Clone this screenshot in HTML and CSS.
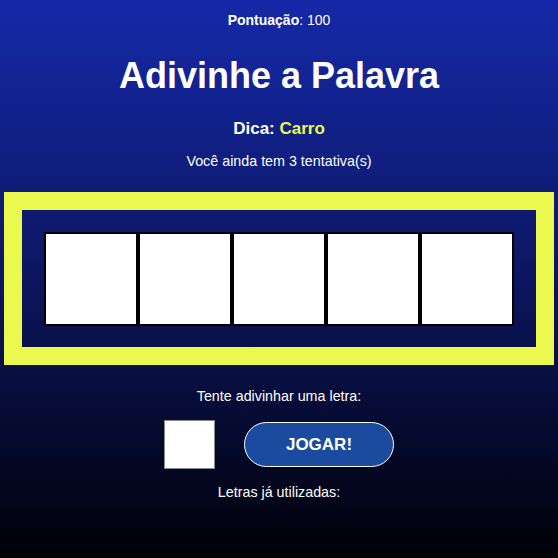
FILE: index.html
```html
<!DOCTYPE html>
<html lang="pt">
<head>
<meta charset="utf-8">
<link rel="stylesheet" href="styles.css">
</head>
<body>
<main class="game">
  <p class="score"><b>Pontuação</b>: 100</p>
  <h1 class="title">Adivinhe a Palavra</h1>
  <p class="hint">Dica: <span class="hint-word">Carro</span></p>
  <p class="tries">Você ainda tem 3 tentativa(s)</p>
  <section class="board">
    <div class="slots">
      <div class="slot"></div>
      <div class="slot"></div>
      <div class="slot"></div>
      <div class="slot"></div>
      <div class="slot"></div>
    </div>
  </section>
  <p class="prompt">Tente adivinhar uma letra:</p>
  <div class="controls">
    <input class="letter" type="text" maxlength="1">
    <button class="play">JOGAR!</button>
  </div>
  <p class="used">Letras já utilizadas:</p>
</main>
</body>
</html>
```
FILE: styles.css
```css
html, body {
  margin: 0;
  height: 100%;
}
body {
  background: linear-gradient(to bottom, #1529a8 0%, #0c1660 50%, #000006 100%);
  font-family: "Liberation Sans", Arial, sans-serif;
  color: #fff;
}
.game {
  display: flex;
  flex-direction: column;
  align-items: center;
  padding: 12px 4px 0;
}
.score {
  margin: 0;
  font-size: 14px;
  line-height: 16px;
}
.title {
  margin: 27px 0 0;
  font-size: 36px;
  line-height: 42px;
  font-weight: bold;
}
.hint {
  margin: 22px 0 0;
  font-size: 17px;
  line-height: 20px;
  font-weight: bold;
}
.hint-word {
  color: #ebf94f;
}
.tries {
  margin: 14px 0 0;
  font-size: 14.3px;
  line-height: 16px;
}
.board {
  margin-top: 23px;
  align-self: stretch;
  border: 18px solid #ebf94f;
  padding: 22px 22px 21px;
  display: flex;
  justify-content: center;
}
.slots {
  display: flex;
}
.slot {
  width: 90px;
  height: 90px;
  background: #fff;
  border: 2px solid #000;
}
.prompt {
  margin: 23px 0 0;
  font-size: 14.3px;
  line-height: 16px;
}
.controls {
  display: flex;
  align-items: center;
  gap: 29px;
  margin-top: 16px;
}
.letter {
  box-sizing: border-box;
  width: 51px;
  height: 49px;
  border: 1px solid #888;
  background: #fff;
  padding: 0;
  margin: 0;
}
.play {
  width: 150px;
  height: 45px;
  border-radius: 23px;
  border: 1px solid #fff;
  background: #1a4b9f;
  color: #fff;
  font-family: "Liberation Sans", Arial, sans-serif;
  font-weight: bold;
  font-size: 17px;
}
.used {
  margin: 15px 0 0;
  font-size: 14.3px;
  line-height: 16px;
}
```
